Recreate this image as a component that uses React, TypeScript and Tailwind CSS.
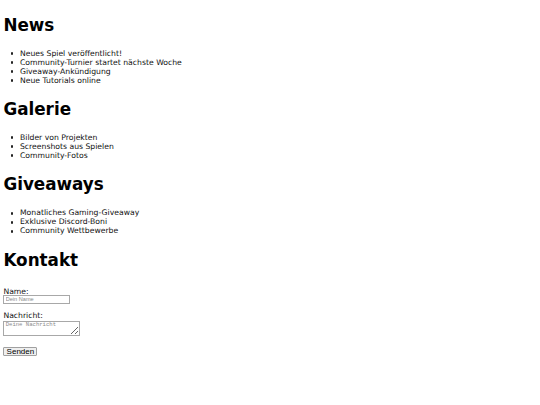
import React from "react";

const font = { fontFamily: '"DejaVu Sans", sans-serif' };

function Section({ title, items, top }: { title: string; items: string[]; top: string }) {
  return (
    <section>
      <h2 className={`${top} text-[16.8px] font-bold leading-[19.56px] text-black`}>{title}</h2>
      <ul className="mt-[13.4px] text-[7.7px] leading-[9px] text-[#111]">
        {items.map((t) => (
          <li key={t} className="flex items-center">
            <span className="ml-[7.2px] mr-[5.6px] mt-[0.6px] inline-block h-[2.8px] w-[2.8px] shrink-0 rounded-full bg-[#222]" />
            <span className="pl-[1px]">{t}</span>
          </li>
        ))}
      </ul>
    </section>
  );
}

export default function App() {
  return (
    <div className="min-h-[405px] w-[540px] bg-white px-[3.4px] text-black" style={font}>
      <Section
        top="pt-[15.7px]"
        title="News"
        items={[
          "Neues Spiel veröffentlicht!",
          "Community-Turnier startet nächste Woche",
          "Giveaway-Ankündigung",
          "Neue Tutorials online",
        ]}
      />
      <Section
        top="mt-[15.45px]"
        title="Galerie"
        items={["Bilder von Projekten", "Screenshots aus Spielen", "Community-Fotos"]}
      />
      <Section
        top="mt-[15.45px]"
        title="Giveaways"
        items={["Monatliches Gaming-Giveaway", "Exklusive Discord-Boni", "Community Wettbewerbe"]}
      />
      <section>
        <h2 className="mt-[15.45px] text-[16.8px] font-bold leading-[19.56px]">Kontakt</h2>
        <form className="mt-[16.8px] flex flex-col items-start text-[7.7px] leading-[9px] text-[#111]">
          <label className="block">Name:</label>
          <input
            placeholder="Dein Name"
            className="-mt-px box-border h-[8.5px] w-[67px] border border-[#a8a8a8] bg-white px-[1.3px] text-[5.6px] leading-[6px] outline-none placeholder:text-[#8a8a8a]"
            style={{ fontFamily: '"Liberation Sans", Arial, sans-serif' }}
          />
          <label className="mt-[7.3px] block">Nachricht:</label>
          <textarea
            placeholder="Deine Nachricht"
            className="mt-[0.5px] box-border h-[15.3px] w-[77px] resize overflow-hidden border border-[#a8a8a8] bg-white px-[1.3px] py-[0.5px] text-[5.6px] leading-[6.5px] outline-none placeholder:text-[#8a8a8a]"
            style={{ fontFamily: '"Liberation Mono", "DejaVu Sans Mono", monospace' }}
          />
          <button
            type="button"
            className="mt-[10.7px] box-border h-[9.3px] w-[34px] rounded-[1px] border border-[#a0a0a0] bg-[#efefef] p-0 text-[8px] leading-[7px] text-black"
            style={{ fontFamily: '"Liberation Sans", Arial, sans-serif' }}
          >
            Senden
          </button>
        </form>
      </section>
    </div>
  );
}
